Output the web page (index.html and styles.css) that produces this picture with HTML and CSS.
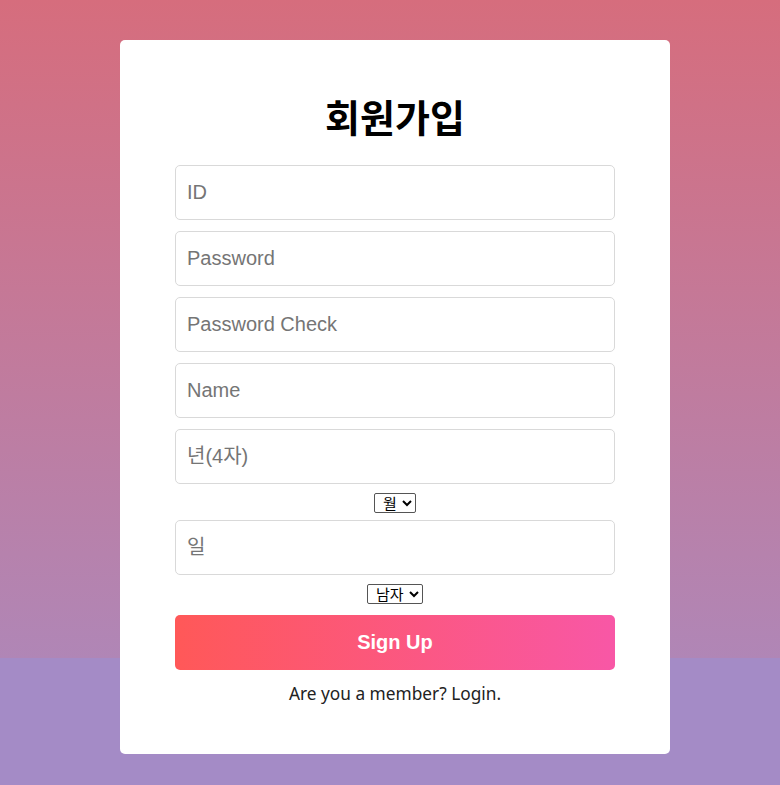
FILE: index.html
```html
<!DOCTYPE html>
<html lang="ko">
<head>
<meta charset="utf-8">
<title>회원가입</title>
<link rel="stylesheet" href="styles.css">
</head>
<body>
<div class="page">
  <form class="card">
    <h1 class="title">회원가입</h1>
    <input class="field" type="text" placeholder="ID">
    <input class="field" type="password" placeholder="Password">
    <input class="field" type="password" placeholder="Password Check">
    <input class="field" type="text" placeholder="Name">
    <input class="field" type="text" placeholder="년(4자)">
    <div class="select-row month-row">
      <select class="sel"><option>월</option></select>
    </div>
    <input class="field day" type="text" placeholder="일">
    <div class="select-row gender-row">
      <select class="sel"><option>남자</option><option>여자</option></select>
    </div>
    <button class="submit" type="button">Sign Up</button>
    <p class="login">Are you a member? Login.</p>
  </form>
</div>
</body>
</html>
```
FILE: styles.css
```css
html, body {
  margin: 0;
  padding: 0;
}
body {
  min-height: 785px;
  background-color: #a48bc6;
  background-image: linear-gradient(to bottom, #d66d7d 0%, #b086b6 100%);
  background-size: 100% 658px;
  background-repeat: no-repeat;
  font-family: "Noto Sans", "Noto Sans CJK KR", sans-serif;
}
.page {
  padding: 40px 0 30px 120px;
}
.card {
  width: 550px;
  box-sizing: border-box;
  background: #fff;
  border-radius: 5px;
  padding: 50px 55px 48px;
  display: flex;
  flex-direction: column;
}
.title {
  margin: 0 0 24px;
  text-align: center;
  font-family: "Noto Sans CJK KR", sans-serif;
  font-size: 38px;
  line-height: 51px;
  font-weight: 700;
  color: #000;
}
.field {
  box-sizing: border-box;
  width: 440px;
  height: 55px;
  margin: 0 0 11px;
  padding: 0 11px;
  border: 1px solid #d9d9d9;
  border-radius: 5px;
  font-family: "Liberation Sans", "Noto Sans CJK KR", sans-serif;
  font-size: 20px;
  color: #333;
  background: #fff;
  outline: none;
}
.field::placeholder {
  color: #757575;
}
.select-row {
  display: flex;
  justify-content: center;
  align-items: center;
}
.month-row {
  margin: -2px 0 7px;
  height: 20px;
}
.gender-row {
  margin: -2px 0 12px;
  height: 19px;
}
.sel {
  box-sizing: border-box;
  font-family: "Liberation Sans", "Noto Sans CJK KR", sans-serif;
  font-size: 15px;
  height: 20px;
  padding: 0 2px 0 4px;
  border: 1px solid #555;
  border-radius: 2px;
  color: #000;
  background: #fff;
}
.submit {
  height: 55px;
  border: none;
  border-radius: 5px;
  background: linear-gradient(to right, #ff5858, #f857a6);
  color: #fff;
  font-family: "Liberation Sans", sans-serif;
  font-weight: 700;
  font-size: 20px;
  cursor: pointer;
}
.login {
  margin: 12px 0 0;
  text-align: center;
  font-size: 17.3px;
  line-height: 24px;
  color: #222;
}
```
